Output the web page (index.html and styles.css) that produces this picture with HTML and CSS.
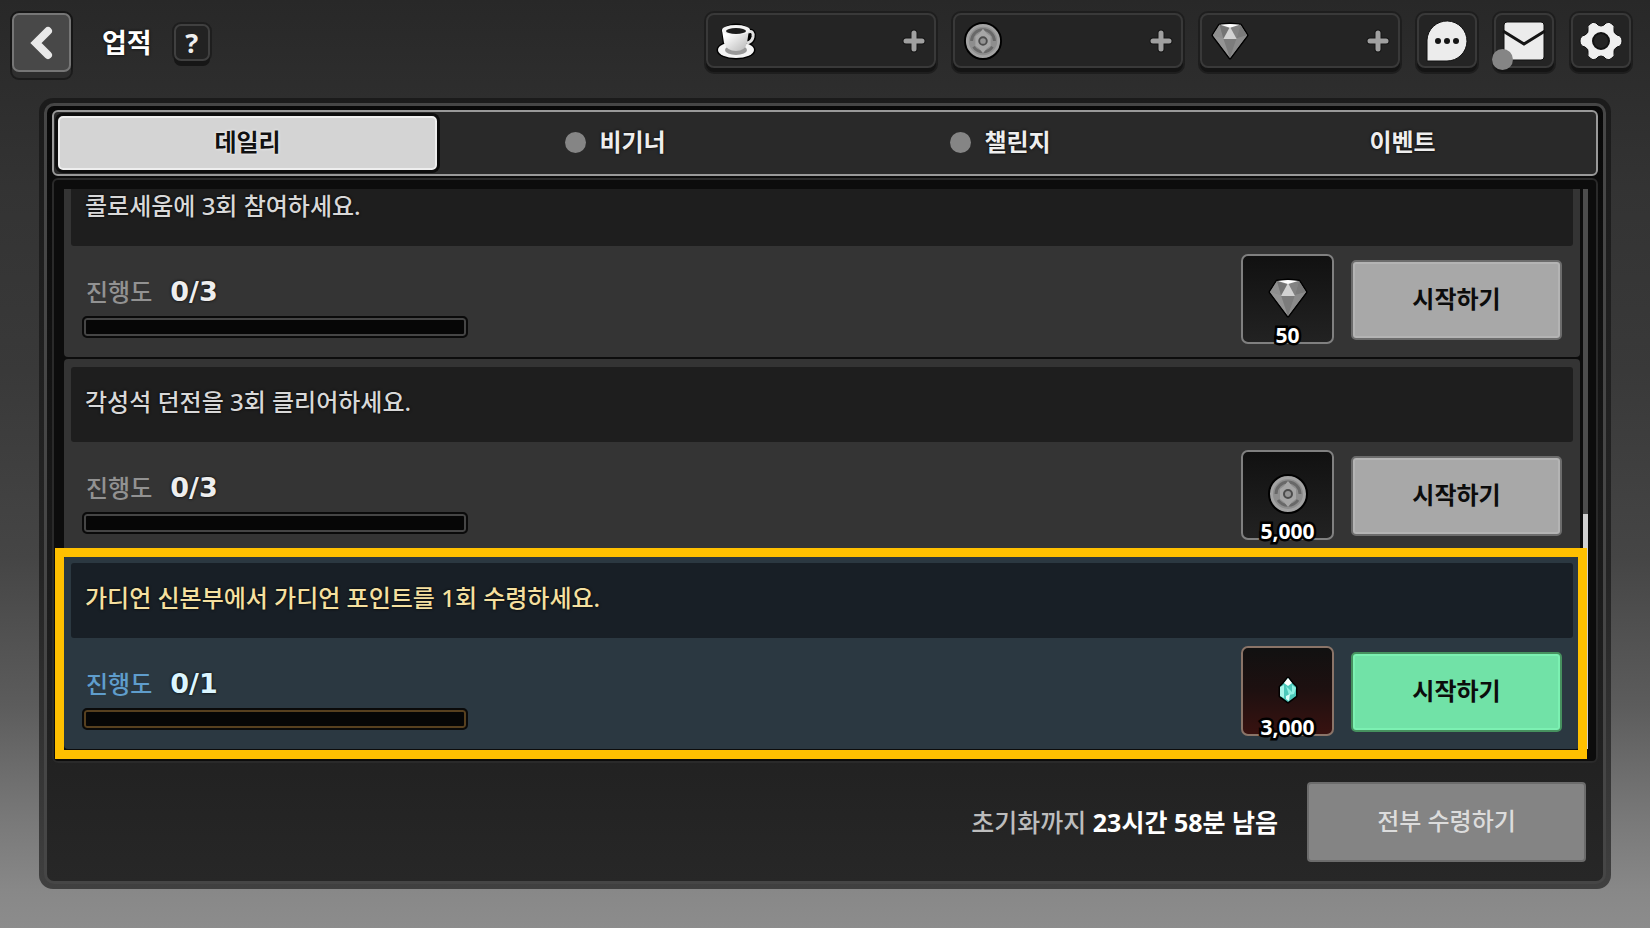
FILE: index.html
```html
<!DOCTYPE html>
<html lang="ko">
<head>
<meta charset="UTF-8" />
<meta name="viewport" content="width=device-width, initial-scale=1" />
<title>업적</title>
<link rel="stylesheet" href="styles.css">
</head>
<body>

<!-- 공용 아이콘 -->
<svg class="sprite" aria-hidden="true">
  <linearGradient id="cupShade" x1="0" y1="0" x2="1" y2="1">
    <stop offset="0.2" stop-color="#fff" />
    <stop offset="1" stop-color="#b4b4b4" />
  </linearGradient>
  <symbol id="gem" viewBox="0 0 40 40">
    <path d="M20 2 L31 3 L38 14 L20 38 L2 14 L9 3 Z" fill="#868686" stroke="#000" stroke-width="3" stroke-linejoin="round" />
    <path d="M20 2 L31 3 L38 14 L20 38 L2 14 L9 3 Z" fill="#868686" />
    <path d="M9 3 L2 14 L13 17 Z" fill="#8e8e8e" />
    <path d="M31 3 L38 14 L27 17 Z" fill="#7a7a7a" />
    <path d="M9 3 L20 7 L13 17 Z" fill="#747474" />
    <path d="M31 3 L20 7 L27 17 Z" fill="#828282" />
    <path d="M2 14 L13 17 L20 38 Z" fill="#949494" />
    <path d="M13 17 L27 17 L20 38 Z" fill="#7c7c7c" />
    <path d="M27 17 L38 14 L20 38 Z" fill="#8b8b8b" />
    <path d="M20 5 L27 18 L13 18 Z" fill="#d2d2d2" />
    <path d="M10 3 L20 2 L30 3 L20 6 Z" fill="#fff" />
  </symbol>
  <symbol id="coin" viewBox="0 0 40 40">
    <circle cx="20" cy="20" r="19" fill="#a3a3a3" stroke="#000" stroke-width="2" />
    <circle cx="20" cy="20" r="15" fill="#8e8e8e" />
    <path d="M8 20 A12 12 0 0 1 32 20 M10 26 A12 12 0 0 0 30 26" fill="none" stroke="#686868" stroke-width="3" />
    <path d="M20 7 L24 12 L28 15 V25 L24 28 L20 33 L16 28 L12 25 V15 L16 12 Z" fill="#a6a6a6" />
    <circle cx="20" cy="20" r="4" fill="#949494" stroke="#4c4c4c" stroke-width="2" />
  </symbol>
  <symbol id="plus" viewBox="0 0 24 24">
    <path d="M12 4 V20 M4 12 H20" stroke="#151515" stroke-width="7" stroke-linecap="round" />
    <path d="M12 4 V20 M4 12 H20" stroke="#a0a0a0" stroke-width="5" stroke-linecap="round" />
  </symbol>
</svg>

<header class="topbar">
  <button class="back" type="button" aria-label="뒤로">
    <svg viewBox="0 0 34 40"><path d="M23 8 L11 20 L23 32" fill="none" stroke="#e8e8e8" stroke-width="8" stroke-linecap="round" /></svg>
  </button>
  <h1 class="title">업적</h1>
  <button class="help" type="button">?</button>

  <div class="wallet">
    <button class="box currency" type="button" aria-label="커피">
      <svg class="cur-icon" viewBox="0 0 40 38">
        <g stroke="#000" stroke-width="3" fill="#000">
          <ellipse cx="20" cy="28" rx="18" ry="8" />
          <path d="M7 8 Q20 -2 33 8 Q40 8 38 17 Q36 22 31 22 Q27 30 20 30 Q11 30 8 20 Z" />
        </g>
        <ellipse cx="20" cy="28" rx="18" ry="8" fill="#f4f4f4" />
        <ellipse cx="20" cy="28" rx="11" ry="5" fill="#999" />
        <path d="M32 10 Q38 8 37 15 Q36 20 31 21" fill="none" stroke="#e0e0e0" stroke-width="3" />
        <path d="M6 8 L8 21 Q11 29 20 29 Q29 29 31 21 L33 8 Z" fill="url(#cupShade)" />
        <ellipse cx="20" cy="8" rx="14" ry="5" fill="#f4f4f4" />
        <ellipse cx="20" cy="9" rx="10" ry="3" fill="#1c1c1c" />
      </svg>
      <svg class="plus"><use href="#plus" /></svg>
    </button>
    <button class="box currency" type="button" aria-label="골드">
      <svg class="cur-icon"><use href="#coin" /></svg>
      <svg class="plus"><use href="#plus" /></svg>
    </button>
    <button class="box currency currency-gem" type="button" aria-label="보석">
      <svg class="cur-icon"><use href="#gem" /></svg>
      <svg class="plus"><use href="#plus" /></svg>
    </button>
    <button class="box menu" type="button" aria-label="채팅">
      <svg viewBox="0 0 44 44">
        <path d="M2 42 V21 A20 20 0 1 1 22 42 Z" fill="#ececec" stroke="#111" stroke-width="1" />
        <circle cx="13" cy="22" r="3" fill="#151515" /><circle cx="22" cy="22" r="3" fill="#151515" /><circle cx="31" cy="22" r="3" fill="#151515" />
      </svg>
    </button>
    <button class="box menu" type="button" aria-label="우편">
      <svg viewBox="0 0 44 44">
        <rect x="2" y="3" width="40" height="38" rx="3" fill="#ececec" stroke="#111" />
        <path d="M1 12 L22 25 L43 12" fill="none" stroke="#151515" stroke-width="3" />
      </svg>
      <span class="dot mail-dot"></span>
    </button>
    <button class="box menu" type="button" aria-label="설정">
      <svg viewBox="0 0 44 44">
        <path d="M11 5 Q14 2 17 4 Q19 7 22 7 Q25 7 27 4 Q30 2 33 5 Q36 7 35 10 Q34 14 38 16 Q43 17 43 22 Q43 27 38 28 Q34 30 35 34 Q36 37 33 39 Q30 42 27 40 Q25 37 22 37 Q19 37 17 40 Q14 42 11 39 Q8 37 9 34 Q10 30 6 28 Q1 27 1 22 Q1 17 6 16 Q10 14 9 10 Q8 7 11 5 Z" fill="#efefef" stroke="#111" stroke-width="1" />
        <circle cx="22" cy="22" r="8" fill="#242424" stroke="#111" stroke-width="2" />
      </svg>
    </button>
  </div>
</header>

<main class="panel">
  <div class="panel-inner">
    <nav class="tabs">
      <button class="tab active" type="button">데일리</button>
      <button class="tab" type="button"><span class="dot"></span>비기너</button>
      <button class="tab" type="button"><span class="dot"></span>챌린지</button>
      <button class="tab" type="button">이벤트</button>
    </nav>

    <section class="list">
      <div class="rows">
        <article class="row">
          <h2 class="row-title">콜로세움에 3회 참여하세요.</h2>
          <div class="row-body">
            <div class="progress">
              <p><span class="label">진행도</span><strong class="count">0/3</strong></p>
              <div class="bar"></div>
            </div>
            <div class="reward">
              <svg><use href="#gem" /></svg>
              <span class="amount">50</span>
            </div>
            <button class="start" type="button">시작하기</button>
          </div>
        </article>
        <article class="row">
          <h2 class="row-title">각성석 던전을 3회 클리어하세요.</h2>
          <div class="row-body">
            <div class="progress">
              <p><span class="label">진행도</span><strong class="count">0/3</strong></p>
              <div class="bar"></div>
            </div>
            <div class="reward">
              <svg><use href="#coin" /></svg>
              <span class="amount">5,000</span>
            </div>
            <button class="start" type="button">시작하기</button>
          </div>
        </article>
        <article class="row highlight">
          <h2 class="row-title">가디언 신본부에서 가디언 포인트를 1회 수령하세요.</h2>
          <div class="row-body">
            <div class="progress">
              <p><span class="label">진행도</span><strong class="count">0/1</strong></p>
              <div class="bar"></div>
            </div>
            <div class="reward">
              <svg viewBox="0 0 40 40">
                <path d="M20 8 L24 13 L28 17 V26 L20 32 L12 26 V17 L16 13 Z" fill="#3fc4b4" stroke="#000" stroke-width="3" stroke-linejoin="round" />
                <path d="M20 8 L24 13 L28 17 V26 L20 32 L12 26 V17 L16 13 Z" fill="#4cc9bb" />
                <path d="M20 8 L24 13 L20 16 L16 13 Z" fill="#fff" />
                <path d="M12 17 L16 15 L16 28 L12 26 Z" fill="#a8f5ea" />
                <path d="M18 16 L24 22 V15 L28 18 L26 24 L21 25 Z" fill="#8ff0e2" />
                <path d="M18 26 L22 24 L21 31 L18 29 Z" fill="#d8fffa" />
              </svg>
              <span class="amount">3,000</span>
            </div>
            <button class="start" type="button">시작하기</button>
          </div>
        </article>
      </div>
      <div class="scroll"><div class="thumb"></div></div>
    </section>

    <footer class="footer">
      <p class="reset">초기화까지 <strong>23시간 58분 남음</strong></p>
      <button class="claim" type="button" disabled>전부 수령하기</button>
    </footer>
  </div>
</main>

</body>
</html>
```

FILE: styles.css
```css
* {
  box-sizing: border-box;
}
body {
  margin: 0;
  height: 100vh;
  min-height: 720px;
  display: flex;
  flex-direction: column;
  overflow: hidden;
  font-family: "Noto Sans", "Noto Sans CJK KR", sans-serif;
  font-size: 24px;
  font-weight: 500;
  line-height: 32px;
  color: #eee;
  background: linear-gradient(#282828, #333 20%, #393939 40%, #454545 60%, #5c5c5c 76%, #787878 88%, #888 96%, #8c8c8c);
}
h1, h2, p {
  margin: 0;
  font-size: inherit;
  font-weight: inherit;
}
button {
  padding: 0;
  border: none;
  font: inherit;
  color: inherit;
  cursor: pointer;
}
svg {
  display: block;
}
.sprite {
  position: absolute;
  width: 0;
  height: 0;
}
.dot {
  width: 21px;
  height: 21px;
  border-radius: 50%;
  background: #858585;
}

/* 상단 바 */
.topbar {
  flex: none;
  height: 98px;
  padding: 13px 19px 0 12px;
  display: flex;
  align-items: flex-start;
}
.back {
  width: 59px;
  height: 59px;
  display: flex;
  align-items: center;
  justify-content: center;
  border: 2px solid #767676;
  border-radius: 7px;
  background: #484848;
  box-shadow: 0 6px 0 #2e2e2e, 0 0 0 2px #161616, 0 6px 0 2px #1c1c1c;
}
.back svg {
  width: 34px;
  height: 40px;
}
.title {
  margin: 14px 22px 0 31px;
  font-size: 27px;
  font-weight: 700;
  color: #fff;
  text-shadow: 0 0 3px #000;
}
.help {
  width: 36px;
  height: 37px;
  margin-top: 11px;
  border: 2px solid #404040;
  border-radius: 7px;
  background: #222;
  font-size: 27px;
  font-weight: 700;
  box-shadow: 0 5px 0 #161616, 0 0 0 2px #1e1e1e;
}
.wallet {
  margin-left: auto;
  display: flex;
  gap: 17px;
}
.box {
  position: relative;
  height: 55px;
  display: flex;
  align-items: center;
  border: 2px solid #393939;
  border-radius: 8px;
  background: #242424;
  box-shadow: 0 4px 0 #141414, 0 0 0 2px #1e1e1e, 0 4px 0 2px #1e1e1e;
}
.currency {
  width: 230px;
  padding: 0 8px;
  justify-content: space-between;
}
.currency-gem {
  width: 200px;
}
.cur-icon {
  width: 40px;
  height: 38px;
}
.plus {
  width: 24px;
  height: 24px;
}
.menu {
  width: 60px;
  justify-content: center;
}
.menu svg {
  flex: none;
  width: 44px;
  height: 44px;
}
.mail-dot {
  position: absolute;
  left: -4px;
  bottom: -4px;
}

/* 패널 */
.panel {
  flex: 1;
  min-height: 0;
  margin: 0 39px 39px;
  padding: 5px;
  display: flex;
  border-radius: 14px;
  background: linear-gradient(#1b1b1b, #242424 60%, #404040);
}
.panel-inner {
  flex: 1;
  min-width: 0;
  padding: 4px 5px 19px;
  display: flex;
  flex-direction: column;
  border: 3px solid #464646;
  border-radius: 10px;
  background: linear-gradient(#080808, #181818 50%, #202020 80%, #272727);
}
.tabs {
  flex: none;
  height: 66px;
  padding: 4px;
  display: grid;
  grid-template-columns: repeat(4, 1fr);
  gap: 6px;
  border: 2px solid #999;
  border-radius: 6px;
  background: #292929;
}
.tab {
  padding-bottom: 2px;
  display: flex;
  align-items: center;
  justify-content: center;
  gap: 13px;
  background: none;
  font-weight: 700;
  text-shadow: 0 0 3px #000;
}
/* 점은 글자의 가운데 정렬에 영향을 주지 않는다 */
.tab .dot {
  margin-left: -34px;
}
.tab.active {
  border: 2px solid #eee;
  border-radius: 5px;
  background: #d4d4d4;
  color: #111;
  text-shadow: 0 0 3px #fff;
  box-shadow: 0 0 0 3px #0c0c0c;
}
.list {
  flex: 1;
  min-height: 0;
  margin-top: 2px;
  padding: 9px 8px 12px 10px;
  display: flex;
  gap: 3px;
  border: 2px solid #2a2a2a;
  border-radius: 6px;
  background: #0c0c0c;
}
.rows {
  position: relative;
  z-index: 1;
  flex: 1;
  min-width: 0;
  display: flex;
  flex-direction: column;
  justify-content: flex-end;
  gap: 2px;
  clip-path: inset(0 -20px -20px);
}
.row {
  flex: none;
  height: 194px;
  padding: 8px 7px 0;
  border-radius: 4px;
  background: #343434;
}
.row-title {
  height: 75px;
  padding: 19px 14px;
  border-radius: 3px;
  background: #1e1e1e;
  color: #d8d8d8;
  text-shadow: 0 0 3px #000;
}
.row-body {
  padding: 8px 11px 0;
  display: flex;
  align-items: flex-start;
}
.progress {
  width: 386px;
  margin-right: auto;
  padding-top: 20px;
}
.progress p {
  display: flex;
  align-items: center;
  gap: 18px;
  padding-left: 4px;
}
.label {
  color: #929292;
}
.count {
  font-family: "DejaVu Sans", sans-serif;
  font-size: 27px;
  line-height: 36px;
  text-shadow: 0 0 3px #000;
}
.bar {
  height: 22px;
  margin-top: 6px;
  border: 2px solid #0a0a0a;
  border-radius: 5px;
  background: #060606;
  box-shadow: inset 0 0 0 2px #454545;
}
.reward {
  position: relative;
  width: 93px;
  height: 90px;
  padding-top: 22px;
  border: 2px solid #808080;
  border-radius: 7px;
  background: linear-gradient(#111, #222);
}
.reward svg {
  width: 40px;
  height: 40px;
  margin: 0 auto;
}
.amount {
  position: absolute;
  left: 0;
  right: 0;
  bottom: -9px;
  text-align: center;
  font-size: 21px;
  font-weight: 700;
  color: #fff;
  -webkit-text-stroke: 5px #000;
  paint-order: stroke fill;
}
.start {
  width: 211px;
  height: 80px;
  margin: 6px 0 0 17px;
  padding-bottom: 2px;
  border: 2px solid #6c6c6c;
  border-radius: 5px;
  background: #a8a8a8;
  color: #0c0c0c;
  font-weight: 700;
  box-shadow: inset 0 0 0 2px #b4b4b4;
}

/* 강조된 업적 */
.highlight {
  position: relative;
  background: #2b3841;
}
.highlight::after {
  content: "";
  position: absolute;
  inset: -7px -7px -10px -9px;
  border: 9px solid #ffc000;
}
.highlight .row-title {
  background: #181f26;
  color: #f5e0a0;
}
.highlight .label {
  color: #5f9dcc;
}
.highlight .count {
  color: #dcf6ff;
}
.highlight .bar {
  box-shadow: inset 0 0 0 2px #57401f;
}
.highlight .reward {
  border-color: #8a7468;
  background: linear-gradient(#111, #1e1010 50%, #381210);
}
.highlight .start {
  border-color: #46915f;
  background: #71e2a7;
  box-shadow: inset 0 0 0 2px #7cf0b2;
}
.scroll {
  width: 5px;
  display: flex;
  align-items: flex-end;
  background: #4c4c4c;
}
.thumb {
  width: 100%;
  height: 42%;
  background: #d0d0d0;
}

.footer {
  flex: none;
  margin-top: 19px;
  padding-right: 12px;
  display: flex;
  align-items: center;
  justify-content: flex-end;
  gap: 29px;
}
.reset {
  font-size: 25px;
  color: #bdbdbd;
}
.reset strong {
  color: #fff;
}
.claim {
  width: 279px;
  height: 80px;
  padding-bottom: 2px;
  border: 2px solid #6c6c6c;
  border-radius: 4px;
  background: #848484;
  color: #dcdcdc;
}
```
